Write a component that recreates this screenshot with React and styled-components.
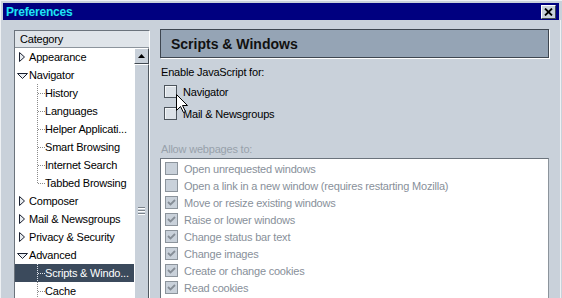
import React from "react";
import styled, { createGlobalStyle } from "styled-components";

const GlobalStyle = createGlobalStyle`
  html, body {
    margin: 0;
    padding: 0;
  }
  body {
    background: #c9d1da;
    font-family: "Liberation Sans", Arial, sans-serif;
    overflow: hidden;
  }
`;

const Window = styled.div`
  position: relative;
  width: 562px;
  height: 298px;
  box-sizing: border-box;
  background: #c9d1da;
  border-top: 1px solid #eef1f4;
  border-left: 1px solid #eef1f4;
  padding: 2px 3px 0 2px;
  overflow: hidden;
`;

const TitleBar = styled.div`
  height: 17px;
  background: #000080;
  display: flex;
  align-items: center;
  justify-content: space-between;
  padding: 0 3px;
`;

const Title = styled.span`
  color: #1ee4f4;
  font-weight: bold;
  font-size: 12px;
  letter-spacing: -0.2px;
`;

const CloseButton = styled.div`
  width: 15px;
  height: 14px;
  box-sizing: border-box;
  background: #c9d1da;
  border: 1px solid;
  border-color: #ffffff #404850 #404850 #ffffff;
  display: flex;
  align-items: center;
  justify-content: center;
`;

const Body = styled.div`
  display: flex;
  align-items: flex-start;
  padding: 9px 0 0 11px;
  width: 546px;
  border-right: 1px solid #eef1f4;
  height: 300px;
`;

const CategoryPanel = styled.div`
  margin-top: 1px;
  width: 136px;
  height: 300px;
  box-sizing: border-box;
  border: 1px solid;
  border-color: #6b737c #ffffff #ffffff #6b737c;
  background: #ffffff;
  display: flex;
  flex-direction: column;
`;

const ColumnHeader = styled.div`
  height: 16px;
  line-height: 16px;
  background: #dfe4e9;
  border-bottom: 1px solid #8c949c;
  padding-left: 5px;
  font-size: 11px;
  letter-spacing: -0.2px;
  color: #000;
`;

const ListArea = styled.div`
  display: flex;
  flex: 1;
`;

const Tree = styled.div`
  flex: 1;
  display: flex;
  flex-direction: column;
`;

const TreeRow = styled.div`
  height: 18px;
  display: flex;
  align-items: center;
  font-size: 11px;
  letter-spacing: -0.2px;
  white-space: nowrap;
  background: ${(p) => (p.$selected ? "#3b4a5c" : "transparent")};
  color: ${(p) => (p.$selected ? "#ffffff" : "#000000")};
`;

const Indent = styled.span`
  width: 14px;
  flex: none;
`;

const Scrollbar = styled.div`
  width: 15px;
  display: flex;
  flex-direction: column;
  background: #dde2e7;
`;

const ScrollButton = styled.div`
  height: 16px;
  box-sizing: border-box;
  background: #c9d1da;
  border: 1px solid;
  border-color: #ffffff #404850 #404850 #ffffff;
  display: flex;
  align-items: center;
  justify-content: center;
`;

const Thumb = styled.div`
  height: 292px;
  box-sizing: border-box;
  background: #c9d1da;
  border: 1px solid;
  border-color: #ffffff #505860 #505860 #ffffff;
  display: flex;
  flex-direction: column;
  align-items: center;
  justify-content: center;
  gap: 2px;
`;

const GripLine = styled.span`
  width: 7px;
  height: 1px;
  background: #7a828a;
  box-shadow: 0 1px 0 #ffffff;
`;

const MainPanel = styled.div`
  margin-left: 10px;
  width: 389px;
  display: flex;
  flex-direction: column;
`;

const SectionHeader = styled.div`
  height: 27px;
  background: #95a4b5;
  border: 1px solid #3e4650;
  box-shadow: 1px 1px 0 #ffffff;
  display: flex;
  align-items: center;
  padding-left: 10px;
  font-weight: bold;
  font-size: 14px;
  color: #111111;
`;

const Label = styled.div`
  margin-top: ${(p) => p.$top}px;
  padding-left: 1px;
  line-height: 16px;
  font-size: 11px;
  letter-spacing: -0.2px;
  color: ${(p) => (p.$disabled ? "#98a1ab" : "#000000")};
`;

const CheckRow = styled.div`
  margin-top: ${(p) => p.$top}px;
  height: 17px;
  display: flex;
  align-items: center;
  gap: 6px;
  padding-left: 4px;
  font-size: 11px;
  letter-spacing: -0.2px;
  color: #000;
`;

const Box = styled.span`
  width: 13px;
  height: 13px;
  box-sizing: border-box;
  flex: none;
  display: flex;
  align-items: center;
  justify-content: center;
  border: 1px solid ${(p) => (p.$disabled ? "#8c949c" : "#4c545c")};
  background: ${(p) => (p.$disabled ? "#c9d1da" : "#dbe1e7")};
  box-shadow: ${(p) => (p.$disabled ? "none" : "inset 1px 1px 0 #f4f6f8")};
`;

const OptionsBox = styled.div`
  margin-top: 1px;
  height: 160px;
  background: #ffffff;
  border: 1px solid;
  border-color: #6b737c #8c949c #8c949c #6b737c;
  padding: 1px 0 0 4px;
  display: flex;
  flex-direction: column;
`;

const OptionRow = styled.div`
  height: 17px;
  display: flex;
  align-items: center;
  gap: 6px;
  font-size: 11px;
  letter-spacing: -0.2px;
  color: #88909a;
  white-space: nowrap;
`;

const Pointer = styled.svg`
  position: absolute;
  left: 175px;
  top: 93px;
`;

const tree = [
  { label: "Appearance", twisty: "closed" },
  { label: "Navigator", twisty: "open" },
  { label: "History", child: true },
  { label: "Languages", child: true },
  { label: "Helper Applicati...", child: true },
  { label: "Smart Browsing", child: true },
  { label: "Internet Search", child: true },
  { label: "Tabbed Browsing", child: true, last: true },
  { label: "Composer", twisty: "closed" },
  { label: "Mail & Newsgroups", twisty: "closed" },
  { label: "Privacy & Security", twisty: "closed" },
  { label: "Advanced", twisty: "open" },
  { label: "Scripts & Windo...", child: true, selected: true },
  { label: "Cache", child: true },
];

const options = [
  { label: "Open unrequested windows", checked: false },
  { label: "Open a link in a new window (requires restarting Mozilla)", checked: false },
  { label: "Move or resize existing windows", checked: true },
  { label: "Raise or lower windows", checked: true },
  { label: "Change status bar text", checked: true },
  { label: "Change images", checked: true },
  { label: "Create or change cookies", checked: true },
  { label: "Read cookies", checked: true },
];

const Twisty = ({ open }) => (
  <svg width="14" height="18" style={{ flex: "none" }}>
    {open ? (
      <polygon points="2.5,7.5 12.5,7.5 7.5,12.5" fill="#e8ecf0" stroke="#1a2030" />
    ) : (
      <polygon points="4.5,4.5 9.5,9 4.5,13.5" fill="#e8ecf0" stroke="#1a2030" />
    )}
  </svg>
);

const Connector = ({ last, light }) => {
  const c = light ? "#e0e6ee" : "#8a8a8a";
  return (
    <svg width="16" height="18" style={{ flex: "none" }}>
      <line x1="8.5" y1="0" x2="8.5" y2={last ? 9 : 18} stroke={c} strokeDasharray="1 1" />
      <line x1="9" y1="9.5" x2="16" y2="9.5" stroke={c} strokeDasharray="1 1" />
    </svg>
  );
};

const Check = ({ checked, disabled }) => (
  <Box $disabled={disabled}>
    {checked && (
      <svg width="9" height="9">
        <polyline points="1,4 3.5,6.5 8,2" fill="none" stroke="#858d96" strokeWidth="1.8" />
      </svg>
    )}
  </Box>
);

export default function App() {
  return (
    <>
      <GlobalStyle />
      <Window>
        <TitleBar>
          <Title>Preferences</Title>
          <CloseButton>
            <svg width="9" height="8">
              <path d="M1 0.5 L8 7.5 M8 0.5 L1 7.5" stroke="#000" strokeWidth="1.8" />
            </svg>
          </CloseButton>
        </TitleBar>
        <Body>
          <CategoryPanel>
            <ColumnHeader>Category</ColumnHeader>
            <ListArea>
              <Tree>
                {tree.map((item) => (
                  <TreeRow key={item.label} $selected={item.selected}>
                    {item.child ? (
                      <>
                        <Indent />
                        <Connector last={item.last} light={item.selected} />
                      </>
                    ) : (
                      <Twisty open={item.twisty === "open"} />
                    )}
                    {item.label}
                  </TreeRow>
                ))}
              </Tree>
              <Scrollbar>
                <ScrollButton>
                  <svg width="7" height="4">
                    <polygon points="3.5,0 7,4 0,4" fill="#000" />
                  </svg>
                </ScrollButton>
                <Thumb>
                  <GripLine />
                  <GripLine />
                  <GripLine />
                </Thumb>
              </Scrollbar>
            </ListArea>
          </CategoryPanel>
          <MainPanel>
            <SectionHeader>Scripts &amp; Windows</SectionHeader>
            <Label $top={6}>Enable JavaScript for:</Label>
            <CheckRow $top={3}>
              <Check />
              Navigator
            </CheckRow>
            <CheckRow $top={5}>
              <Check />
              Mail &amp; Newsgroups
            </CheckRow>
            <Label $top={19} $disabled>
              Allow webpages to:
            </Label>
            <OptionsBox>
              {options.map((o) => (
                <OptionRow key={o.label}>
                  <Check checked={o.checked} disabled />
                  {o.label}
                </OptionRow>
              ))}
            </OptionsBox>
          </MainPanel>
        </Body>
        <Pointer width="13" height="20" viewBox="0 0 13 20">
          <path
            d="M0.5 0.5 L0.5 16.5 L4.5 12.5 L7.5 18.5 L9.5 17.5 L6.5 11.5 L11.5 11.5 Z"
            fill="#ffffff"
            stroke="#000000"
          />
        </Pointer>
      </Window>
    </>
  );
}
